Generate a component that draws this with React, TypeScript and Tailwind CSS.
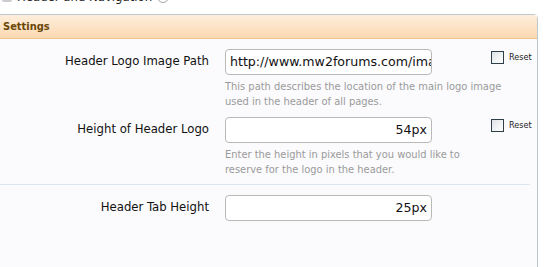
import React from "react";

const labelFont = "font-['Tahoma','DejaVu_Sans_Condensed','DejaVu_Sans',sans-serif]";

function ResetBox() {
  return (
    <div className="flex items-center gap-[5px] text-[9px] leading-[13px] text-[#222]">
      <span className="block w-[13px] h-[13px] border border-[#2f3f4a] bg-gradient-to-br from-[#dfe3e6] to-[#ffffff]" />
      <span>Reset</span>
    </div>
  );
}

function Row({
  label,
  value,
  right,
  help,
  reset,
}: {
  label: string;
  value: string;
  right?: boolean;
  help?: string[];
  reset?: boolean;
}) {
  return (
    <div className="flex">
      <div className="w-[210px] shrink-0 pr-[1px] pt-[4px] text-right text-[13px] leading-[16px] text-[#111]">
        {label}
      </div>
      <div className="ml-[15px] w-[207px] shrink-0">
        <div
          className={
            "h-[26px] w-[207px] overflow-hidden whitespace-nowrap rounded-[4px] border border-[#b9b9b9] bg-white px-[4px] font-['DejaVu_Sans',sans-serif] text-[12.6px] leading-[24px] text-[#111] " +
            (right ? "text-right" : "text-left")
          }
        >
          {value}
        </div>
        {help && (
          <div className="mt-[4px] w-[290px] text-[11px] leading-[15px] text-[#9a9a9a]">
            {help.map((l) => (
              <div key={l}>{l}</div>
            ))}
          </div>
        )}
      </div>
      {reset && (
        <div className="ml-[59px] pt-[2px]">
          <ResetBox />
        </div>
      )}
    </div>
  );
}

export default function App() {
  return (
    <div className={"w-[546px] h-[267px] overflow-hidden bg-white " + labelFont}>
      <div className="h-[14px] overflow-hidden">
        <div className="-mt-[10px] flex items-center gap-[5px] pl-[2px] text-[13px] leading-[14px] text-[#222]">
          <span className="block w-[10px] h-[10px] rounded-[2px] bg-[#c9cdd2]" />
          <span>Header and Navigation</span>
          <span className="block w-[12px] h-[12px] rounded-full border border-[#a8a8a8] bg-white" />
        </div>
      </div>
      <div className="mr-[8px] h-[253px] rounded-tr-[5px] border-t border-r border-[#bcc8d0] bg-[#fbfbfd]">
        <div className="h-[24px] border-b border-[#f0c48c] bg-gradient-to-b from-[#fdeedc] to-[#fbd9b1] pl-[3px] text-[11px] font-bold leading-[24px] text-[#6a4608]">
          Settings
        </div>
        <div className="pt-[10px]">
          <Row
            label="Header Logo Image Path"
            value="http://www.mw2forums.com/images/misc/logo.png"
            help={[
              "This path describes the location of the main logo image",
              "used in the header of all pages.",
            ]}
            reset
          />
          <div className="h-[8px]" />
          <Row
            label="Height of Header Logo"
            value="54px"
            right
            help={[
              "Enter the height in pixels that you would like to",
              "reserve for the logo in the header.",
            ]}
            reset
          />
          <div className="mt-[7px] mr-[7px] border-t border-[#dde6ee]" />
          <div className="pt-[10px]">
            <Row label="Header Tab Height" value="25px" right />
          </div>
        </div>
      </div>
    </div>
  );
}
